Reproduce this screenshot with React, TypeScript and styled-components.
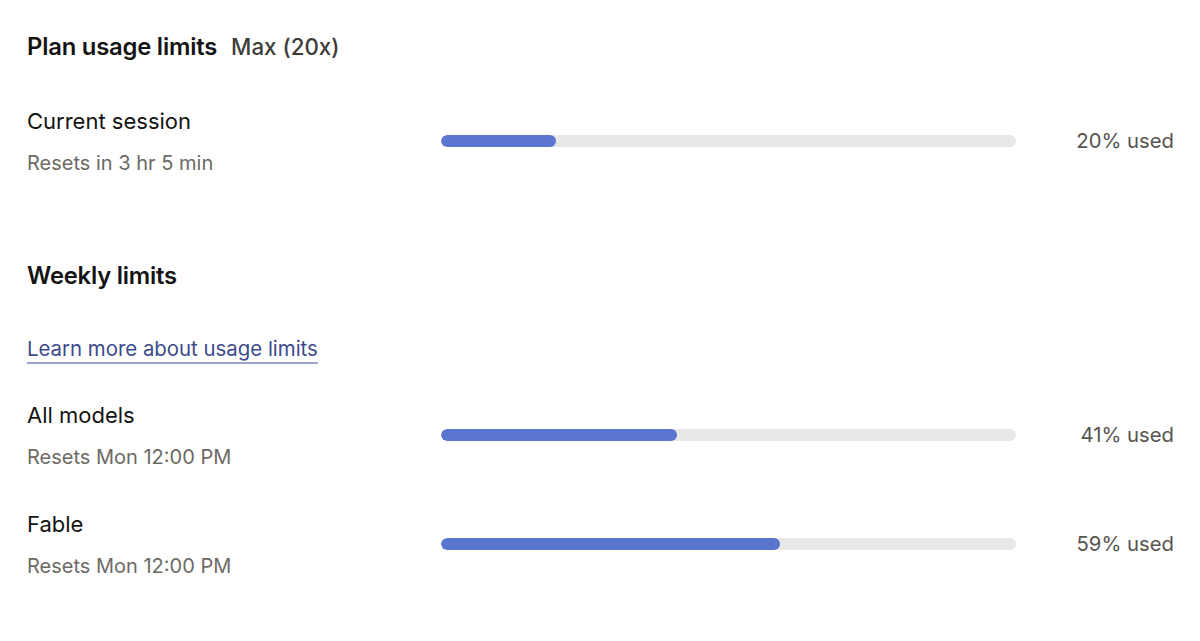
import styled, { createGlobalStyle } from 'styled-components';

const GlobalStyle = createGlobalStyle`
  body {
    margin: 0;
    background: #ffffff;
    font-family: Inter, "Noto Sans", sans-serif;
    color: #141413;
  }
`

const Page = styled.div`
  display: flex;
  flex-direction: column;
  padding: 32px 26px 0 27px;
`

const Header = styled.div`
  display: flex;
  align-items: baseline;
  gap: 14px;
  height: 30px;
`

const Title = styled.h2`
  margin: 0;
  font-size: 23.8px;
  font-weight: 600;
  line-height: 30px;
  letter-spacing: -0.2px;
  color: #141413;
`

const PlanName = styled.span`
  font-size: 22.3px;
  font-weight: 500;
  color: #3d3d3a;
`

const Row = styled.div<{ $top: number }>`
  display: grid;
  grid-template-columns: 414px 575px 1fr;
  align-items: center;
  margin-top: ${p => p.$top}px;
`

const Labels = styled.div`
  display: flex;
  flex-direction: column;
  gap: 14px;
`

const Label = styled.div`
  font-size: 22px;
  line-height: 28px;
  color: #141413;
`

const Sub = styled.div`
  font-size: 20px;
  line-height: 28px;
  color: #6b6a66;
`

const Track = styled.div`
  height: 12px;
  margin-top: -3px;
  border-radius: 6px;
  background: #e8e8e6;
  overflow: hidden;
`

const Fill = styled.div`
  height: 100%;
  border-radius: 6px;
  background: #5a76cf;
`

const Percent = styled.div`
  margin-top: -4px;
  text-align: right;
  font-size: 20.3px;
  color: #55544f;
`

const SectionTitle = styled.h3`
  margin: 85px 0 0;
  font-size: 23.8px;
  font-weight: 600;
  line-height: 28px;
  letter-spacing: -0.2px;
  color: #141413;
`

const LearnLink = styled.a`
  align-self: flex-start;
  margin-top: 45px;
  font-size: 20.4px;
  line-height: 28px;
  color: #3c4b8c;
  text-decoration: underline;
  text-decoration-color: #9aa4cf;
  text-underline-offset: 6px;
  text-decoration-thickness: 1.5px;
`

type Limit = { label: string; reset: string; used: number; top: number };

const UsageRow = ({ label, reset, used, top }: Limit) => (
  <Row $top={top}>
    <Labels>
      <Label>{label}</Label>
      <Sub>{reset}</Sub>
    </Labels>
    <Track>
      <Fill style={{ width: `${used}%` }} />
    </Track>
    <Percent>{used}% used</Percent>
  </Row>
)

const App = () => (
  <>
    <GlobalStyle />
    <Page>
      <Header>
        <Title>Plan usage limits</Title>
        <PlanName>Max (20x)</PlanName>
      </Header>
      <UsageRow label="Current session" reset="Resets in 3 hr 5 min" used={20} top={45} />
      <SectionTitle>Weekly limits</SectionTitle>
      <LearnLink href="#">Learn more about usage limits</LearnLink>
      <UsageRow label="All models" reset="Resets Mon 12:00 PM" used={41} top={38} />
      <UsageRow label="Fable" reset="Resets Mon 12:00 PM" used={59} top={39} />
    </Page>
  </>
)

export default App
